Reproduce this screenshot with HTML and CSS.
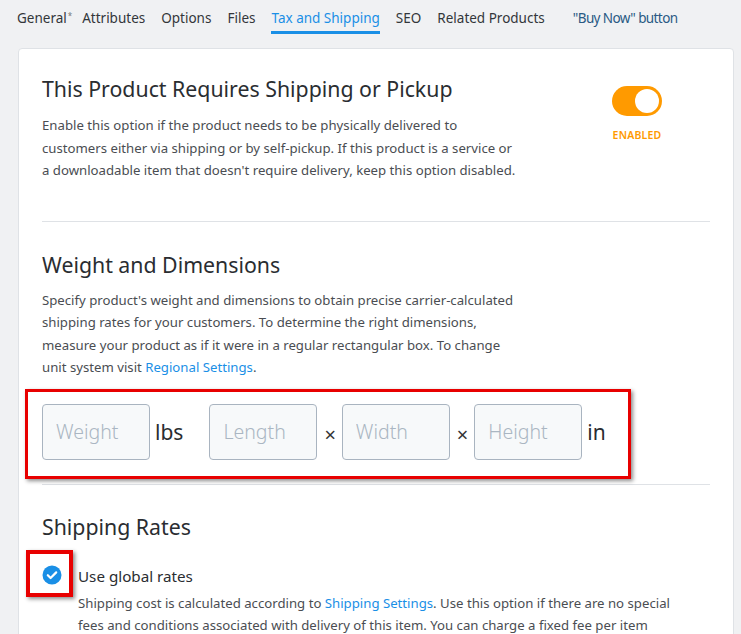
FILE: index.html
```html
<!DOCTYPE html>
<html>
<head>
<meta charset="utf-8">
<link rel="stylesheet" href="styles.css">
</head>
<body>
<nav class="tabs">
  <span class="tab first">General<sup class="req">*</sup></span>
  <span class="tab">Attributes</span>
  <span class="tab">Options</span>
  <span class="tab">Files</span>
  <span class="tab active">Tax and Shipping</span>
  <span class="tab">SEO</span>
  <span class="tab">Related Products</span>
  <span class="tab buy">"Buy Now" button</span>
</nav>
<main class="card">
  <section class="section top">
    <div class="text">
      <h2>This Product Requires Shipping or Pickup</h2>
      <p>Enable this option if the product needs to be physically delivered to<br>customers either via shipping or by self-pickup. If this product is a service or<br>a downloadable item that doesn't require delivery, keep this option disabled.</p>
    </div>
    <div class="toggle-wrap">
      <span class="toggle"><span class="knob"></span></span>
      <span class="toggle-label">ENABLED</span>
    </div>
  </section>
  <section class="section dims-section">
    <h2>Weight and Dimensions</h2>
    <p>Specify product's weight and dimensions to obtain precise carrier-calculated<br>shipping rates for your customers. To determine the right dimensions,<br>measure your product as if it were in a regular rectangular box. To change<br>unit system visit <a href="#">Regional Settings</a>.</p>
    <div class="dims">
      <input class="field" placeholder="Weight">
      <span class="unit">lbs</span>
      <input class="field" placeholder="Length">
      <span class="times">×</span>
      <input class="field" placeholder="Width">
      <span class="times">×</span>
      <input class="field" placeholder="Height">
      <span class="unit">in</span>
    </div>
  </section>
  <section class="section rates">
    <h2>Shipping Rates</h2>
    <div class="option">
      <span class="check">
        <svg width="20" height="20" viewBox="0 0 20 20"><circle cx="10" cy="10" r="9.5" fill="#1a8fe6"/><path d="M5.8 10.2l2.8 2.8 5.6-5.6" fill="none" stroke="#fff" stroke-width="2.2" stroke-linecap="round" stroke-linejoin="round"/></svg>
        <span class="mark"></span>
      </span>
      <div class="option-text">
        <div class="option-title">Use global rates</div>
        <p>Shipping cost is calculated according to <a href="#">Shipping Settings</a>. Use this option if there are no special<br>fees and conditions associated with delivery of this item. You can charge a fixed fee per item</p>
      </div>
    </div>
  </section>
</main>
</body>
</html>
```
FILE: styles.css
```css
* { box-sizing: border-box; }
html, body { margin: 0; padding: 0; }
body {
  background: #f0f1f3;
  font-family: "Noto Sans", "Open Sans", sans-serif;
  color: #34373b;
  overflow: hidden;
  height: 634px;
}
.tabs {
  display: flex;
  padding: 7px 0 0 17px;
  height: 48px;
  font-size: 13.5px;
}
.tab {
  margin-right: 16px;
  padding-top: 2px;
  height: 27px;
  color: #33363a;
  white-space: nowrap;
}
.tab.first { margin-right: 10px; }
.req { font-size: 8px; color: #777; vertical-align: top; position: relative; top: 1px; margin-left: 1px; }
.tab.active {
  color: #1a8fe6;
  border-bottom: 3px solid #1a8fe6;
}
.tab.buy { color: #2a5a84; margin-left: 12px; letter-spacing: -0.6px; }
.card {
  margin: 0 7px 0 18px;
  background: #fff;
  border: 1px solid #dfe2e6;
  border-radius: 4px;
  padding: 0 23px 0 23px;
  height: 600px;
}
.section { border-bottom: 1px solid #dfe2e6; }
.section.top {
  display: flex;
  justify-content: space-between;
  padding: 25px 0 39px;
}
h2 {
  margin: 0;
  font-size: 21.3px;
  font-weight: 400;
  color: #2a2d31;
  line-height: 30px;
}
p {
  margin: 0;
  font-size: 13.2px;
  line-height: 22.5px;
  color: #4a4d52;
  white-space: nowrap;
}
.text h2 { margin-bottom: 10px; }
a { color: #1a8fe6; text-decoration: none; }
.toggle-wrap {
  display: flex;
  flex-direction: column;
  align-items: center;
  margin-right: 48px;
  margin-top: 12px;
}
.toggle {
  width: 50px;
  height: 30px;
  border-radius: 15px;
  background: #ff9a00;
  position: relative;
}
.knob {
  position: absolute;
  right: 3px;
  top: 3px;
  width: 24px;
  height: 24px;
  border-radius: 50%;
  background: #fff;
}
.toggle-label {
  margin-top: 12px;
  font-size: 10.5px;
  font-weight: 600;
  color: #ff9a00;
  letter-spacing: 0.2px;
}
.dims-section { padding: 28px 0 0; }
.dims-section h2 { margin-bottom: 9px; }
.dims {
  display: flex;
  align-items: flex-start;
  margin: 10px 0 5px -17px;
  width: 606px;
  height: 90px;
  border: 3px solid #e80000;
  padding: 12px 0 0 14px;
  box-shadow: 2px 2px 4px rgba(0,0,0,0.45);
}
.field {
  width: 108px;
  height: 56px;
  border: 1px solid #a9b4c0;
  border-radius: 4px;
  background: #f7f9fa;
  font-family: inherit;
  font-size: 19.5px;
  font-weight: 300;
  padding: 0 13px;
  color: #333;
}
.field::placeholder { color: #aab6c2; }
.unit { font-size: 21px; color: #2a2d31; margin-left: 5px; line-height: 56px; }
.unit + .field { margin-left: 26px; }
.times { font-size: 20px; color: #333; margin: 3px 6px 0 7px; line-height: 56px; }
.rates { border-bottom: 0; padding-top: 27px; }
.rates h2 { margin-bottom: 23px; }
.option { display: flex; align-items: flex-start; }
.check {
  position: relative;
  width: 37px;
  flex: none;
  margin-left: -1px;
  padding-top: 0;
}
.check svg { display: block; margin-left: 1px; }
.mark {
  position: absolute;
  left: -15px;
  top: -15px;
  width: 47px;
  height: 47px;
  border: 4px solid #e80000;
  box-shadow: 2px 2px 4px rgba(0,0,0,0.45);
}
.option-title {
  font-size: 15.2px;
  color: #2a2d31;
  line-height: 22px;
  margin-bottom: 5px;
}
```
